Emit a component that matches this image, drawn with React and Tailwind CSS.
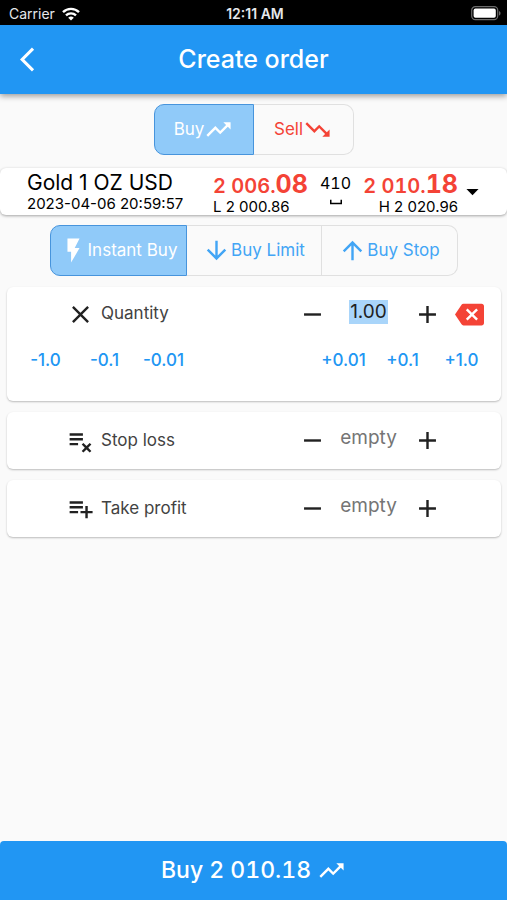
import { useState } from "react";
import {
  MdAdd,
  MdArrowBackIos,
  MdArrowDownward,
  MdArrowDropDown,
  MdArrowUpward,
  MdBackspace,
  MdClose,
  MdFlashOn,
  MdPlaylistAdd,
  MdPlaylistRemove,
  MdRemove,
  MdSpaceBar,
  MdTrendingDown,
  MdTrendingUp,
} from "react-icons/md";

const ICON = "size-[29px] shrink-0";

function StatusBar() {
  return (
    <div className="grid h-[25px] grid-cols-3 items-center bg-black pt-[2px] pr-[6px] pl-[9px] text-sm text-gray-200">
      <div className="flex items-center gap-[7px]">
        <span>Carrier</span>
        <svg viewBox="0 0 18 14" className="h-[14px] w-[18px]" fill="none" stroke="white" strokeWidth="2.4">
          <path d="M1 5.2a11.4 11.4 0 0 1 16 0" />
          <path d="M4 8.4a7.2 7.2 0 0 1 10 0" />
          <path d="M9 13.6 6.2 10.8a4 4 0 0 1 5.6 0z" fill="white" stroke="none" />
        </svg>
      </div>
      <span className="text-center font-semibold">12:11 AM</span>
      <svg viewBox="0 0 30 15" className="h-[15px] w-[30px] justify-self-end">
        <rect x="0.7" y="0.7" width="26" height="13" rx="3.6" fill="none" stroke="#6b6b6b" strokeWidth="1.2" />
        <rect x="2.6" y="2.6" width="22.2" height="9.2" rx="1.8" fill="white" />
        <path d="M28 5c2 .8 2 3.8 0 4.6z" fill="#6b6b6b" />
      </svg>
    </div>
  );
}

function Header() {
  return (
    <header className="grid h-[69px] grid-cols-[48px_1fr_48px] items-center bg-[#2196f3] text-white shadow-[0_2px_6px_rgba(0,0,0,0.4)]">
      <button type="button" aria-label="Back" className="pl-[20px]">
        <MdArrowBackIos className={ICON} />
      </button>
      <h1 className="text-center text-[25px] font-medium">Create order</h1>
    </header>
  );
}

function SideToggle({ side, onChange }) {
  const base = "flex h-[51px] w-[100px] items-center justify-center border text-[17px]";
  return (
    <div className="mt-[10px] flex justify-center">
      <button
        type="button"
        aria-pressed={side === "buy"}
        onClick={() => onChange("buy")}
        className={`${base} rounded-l-[10px] border-[#4794dc] bg-[#90caf9] text-white`}
      >
        Buy
        <MdTrendingUp className={ICON} />
      </button>
      <button
        type="button"
        aria-pressed={side === "sell"}
        onClick={() => onChange("sell")}
        className={`${base} rounded-r-[10px] border-l-0 border-[#e0e0e0] text-[#f44336]`}
      >
        Sell
        <MdTrendingDown className={ICON} />
      </button>
    </div>
  );
}

function Price({ whole, cents, note, align }) {
  return (
    <div className={`flex w-[95px] flex-col ${align}`}>
      <div className="flex h-[30px] items-baseline font-semibold whitespace-nowrap text-[#f44336] tabular-nums">
        <span className="text-xl">{whole}</span>
        <span className="text-[25px] leading-8 font-bold">{cents}</span>
      </div>
      <span className="text-[15px] leading-[17px] whitespace-nowrap">{note}</span>
    </div>
  );
}

function Quote() {
  return (
    <section className="mt-[13px] flex h-[47px] items-start rounded-md bg-white pr-[20px] pl-[27px] text-black shadow-[0_1px_3px_rgba(0,0,0,0.35)]">
      <div className="flex flex-1 flex-col whitespace-nowrap">
        <span className="h-[28px] text-[21px] leading-[30px]">Gold 1 OZ USD</span>
        <span className="text-[15px] leading-[16px]">2023-04-06 20:59:57</span>
      </div>
      <Price whole="2 006." cents="08" note="L 2 000.86" align="items-start" />
      <div className="flex w-[55px] flex-col items-center">
        <span className="text-base leading-[30px] tabular-nums">410</span>
        <MdSpaceBar className="size-[18px] -mt-[5px]" />
      </div>
      <Price whole="2 010." cents="18" note="H 2 020.96" align="items-end" />
      <button type="button" aria-label="Choose instrument" className="w-[29px] self-center">
        <MdArrowDropDown className={ICON} />
      </button>
    </section>
  );
}

function OrderTypes() {
  const base = "flex h-[51px] items-center justify-center border text-[17px] whitespace-nowrap";
  return (
    <div className="mt-[10px] flex justify-center">
      <button type="button" className={`${base} w-[137px] rounded-l-[10px] border-[#4794dc] bg-[#90caf9] text-white`}>
        <MdFlashOn className={ICON} />
        Instant Buy
      </button>
      <button type="button" className={`${base} w-[135px] border-l-0 border-[#e0e0e0] text-[#42a5f5]`}>
        <MdArrowDownward className={ICON} />
        Buy Limit
      </button>
      <button type="button" className={`${base} w-[136px] rounded-r-[10px] border-l-0 border-[#e0e0e0] text-[#42a5f5]`}>
        <MdArrowUpward className={ICON} />
        Buy Stop
      </button>
    </div>
  );
}

function Card({ children }) {
  return (
    <section className="rounded-md bg-white shadow-[0_1px_2px_rgba(0,0,0,0.25)]">{children}</section>
  );
}

function Field({ id, icon: Icon, label, children, action, height = "h-[57px]" }) {
  return (
    <div className={`flex items-center pr-[17px] pl-[59px] text-[#212121] ${height}`}>
      <Icon className={ICON} />
      <label htmlFor={id} className="flex-1 pl-[6px] text-[17px] text-[#424242]">
        {label}
      </label>
      <button type="button" aria-label={`Decrease ${label}`}>
        <MdRemove className={ICON} />
      </button>
      <div className="flex w-[86px] justify-center pr-[3px] pb-[4px]">{children}</div>
      <button type="button" aria-label={`Increase ${label}`}>
        <MdAdd className={ICON} />
      </button>
      <div className="ml-[13px] flex w-[29px]">{action}</div>
    </div>
  );
}

function Steps({ values }) {
  return (
    <div className="flex">
      {values.map((value) => (
        <button key={value} type="button" className="h-[40px] w-[59px] text-[17px] font-medium text-[#2196f3]">
          {value}
        </button>
      ))}
    </div>
  );
}

function App() {
  const [side, setSide] = useState("buy");
  const [quantity, setQuantity] = useState("1.00");

  return (
    <div className="flex min-h-screen flex-col bg-[#fafafa] font-[Inter,sans-serif]">
      <StatusBar />
      <Header />
      <main>
        <SideToggle side={side} onChange={setSide} />
        <Quote />
        <OrderTypes />

        <div className="mt-[11px] flex flex-col gap-[11px] pr-[6px] pl-[7px]">
          <Card>
            <Field
              id="quantity"
              icon={MdClose}
              label="Quantity"
              height="h-[54px]"
              action={
                <button type="button" aria-label="Clear quantity" onClick={() => setQuantity("")}>
                  <MdBackspace className={`${ICON} text-[#f44336]`} />
                </button>
              }
            >
              <input
                id="quantity"
                value={quantity}
                onChange={(e) => setQuantity(e.target.value)}
                className="h-[24px] w-[39px] bg-[#a9d5fa] text-center text-[19px] outline-none"
              />
            </Field>
            <div className="flex justify-between pr-[10px] pb-[20px] pl-[9px]">
              <Steps values={["-1.0", "-0.1", "-0.01"]} />
              <Steps values={["+0.01", "+0.1", "+1.0"]} />
            </div>
          </Card>
          <Card>
            <Field id="stop-loss" icon={MdPlaylistRemove} label="Stop loss">
              <input id="stop-loss" placeholder="empty" className="w-full text-center text-[19px] outline-none placeholder:text-[#757575]" />
            </Field>
          </Card>
          <Card>
            <Field id="take-profit" icon={MdPlaylistAdd} label="Take profit">
              <input id="take-profit" placeholder="empty" className="w-full text-center text-[19px] outline-none placeholder:text-[#757575]" />
            </Field>
          </Card>
        </div>
      </main>

      <button
        type="button"
        className="mt-auto flex h-[59px] items-center justify-center gap-[6px] rounded-t-[4px] bg-[#2196f3] text-[23px] font-medium text-white tabular-nums"
      >
        Buy 2 010.18
        <MdTrendingUp className={ICON} />
      </button>
    </div>
  );
}

export default App;
